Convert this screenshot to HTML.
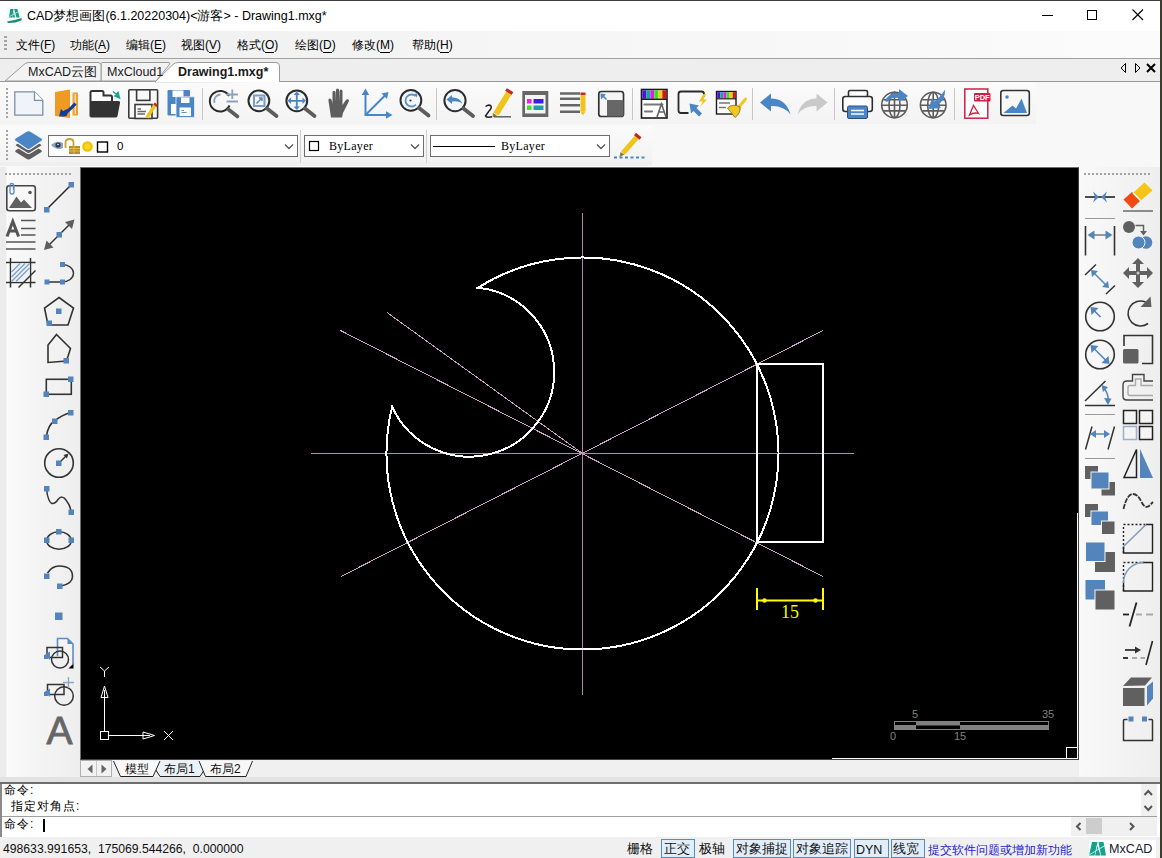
<!DOCTYPE html>
<html><head><meta charset="utf-8">
<style>
*{box-sizing:border-box}
html,body{margin:0;padding:0}
body{width:1162px;height:858px;overflow:hidden;position:relative;background:#f0f0f0;font-family:"Liberation Sans",sans-serif;color:#000}
.a{position:absolute}
.t{position:absolute;white-space:nowrap;line-height:1}
svg{position:absolute;overflow:visible}
u{text-decoration:none;border-bottom:1px solid #000}
</style></head><body>
<!-- title bar -->
<div class="a" style="left:0;top:0;width:1162px;height:31px;background:#fff;border-top:1px solid #3c3c3c"></div>
<!-- menu bar -->
<div class="a" style="left:0;top:31px;width:1160px;height:27px;background:linear-gradient(90deg,#eeeeee,#f5f5f5 40%,#f9f9f9 80%,#fbfbfb)"></div>
<div class="a" style="left:0;top:58px;width:1160px;height:1px;background:#a0a0a0"></div>
<!-- doc tabs strip -->
<div class="a" style="left:0;top:59px;width:1160px;height:22px;background:#eeeeee"></div>
<div class="a" style="left:0;top:81px;width:1160px;height:1px;background:#9a9a9a"></div>
<!-- toolbars -->
<div class="a" style="left:0;top:82px;width:1160px;height:85px;background:#f8f8f8"></div>
<div class="a" style="left:0;top:82px;width:1036px;height:42px;background:linear-gradient(#fbfbfb,#f3f3f3)"></div>
<div class="a" style="left:0;top:126px;width:652px;height:38px;background:linear-gradient(#fbfbfb,#f2f2f2)"></div>
<div class="a" style="left:0;top:162px;width:652px;height:4px;background:#efefef"></div>
<div class="a" style="left:80px;top:166px;width:999px;height:1px;background:#fff"></div>
<!-- left & right toolbars -->
<div class="a" style="left:0;top:167px;width:80px;height:610px;background:linear-gradient(90deg,#ececec 0,#ececec 6px,#fbfbfb 7px,#f5f5f5 40%,#eeeeee 100%)"></div>
<div class="a" style="left:1079px;top:167px;width:81px;height:610px;background:linear-gradient(90deg,#f9f9f9,#eeeeee)"></div>
<!-- canvas -->
<div class="a" style="left:80px;top:167px;width:999px;height:593px;background:#000;border-left:1px solid #6d6d6d;border-top:1px solid #6d6d6d;border-right:1px solid #404040;border-bottom:1px solid #404040"></div>
<div class="a" style="left:1077px;top:513px;width:1px;height:246px;background:#fff"></div>
<div class="a" style="left:832px;top:758px;width:246px;height:1px;background:#fff"></div>
<!-- layout tabs bg -->
<div class="a" style="left:80px;top:760px;width:999px;height:17px;background:#f0f0f0"></div>
<!-- splitter -->
<div class="a" style="left:0;top:777px;width:1160px;height:6px;background:#e3e3e3"></div>
<div class="a" style="left:0;top:782px;width:1160px;height:2px;background:#6e6e6e"></div>
<!-- command area -->
<div class="a" style="left:0;top:784px;width:1160px;height:53px;background:#fff;border-left:2px solid #8a8a8a"></div>
<div class="a" style="left:2px;top:816px;width:1155px;height:1px;background:#a0a0a0"></div>
<!-- status bar bg -->
<div class="a" style="left:0;top:837px;width:1160px;height:21px;background:#f0f0f0"></div>
<!-- right window border -->
<div class="a" style="left:1160px;top:0;width:2px;height:858px;background:#3b3d2e"></div>
<!-- title icon -->
<svg class="a" style="left:0;top:0" width="30" height="30" viewBox="0 0 30 30">
<rect x="6" y="7" width="16" height="16" fill="#f4fbfb"/>
<path d="M9 17.5 L10.3 9 H13.6 L12.3 17.5 Z M12.5 17.5 L13.8 12 L15 17.5 Z M14.2 9 H17.4 L19.6 17.5 H16.4 Z" fill="#1e9a82"/>
<path d="M9.5 16.5 L18.5 11.5" stroke="#b8f4ec" stroke-width="0.8"/>
<path d="M7 21.5 Q14 20.5 21.8 18 L21.3 20.5 Q15 23.2 8 23 Z" fill="#1e8a72"/>
</svg>
<div class="t" style="left:27px;top:10px;font-size:12.5px;color:#000">CAD梦想画图(6.1.20220304)&lt;游客&gt; - Drawing1.mxg*</div>
<!-- window controls -->
<div class="a" style="left:1042px;top:15px;width:11px;height:1px;background:#000"></div>
<div class="a" style="left:1087px;top:10px;width:10px;height:10px;border:1px solid #000"></div>
<svg class="a" style="left:1132px;top:9px" width="12" height="12" viewBox="0 0 12 12"><path d="M0.5 0.5 L11 11 M11 0.5 L0.5 11" stroke="#000" stroke-width="1.1"/></svg>
<!-- menu -->
<div class="a" style="left:4px;top:36px;width:3px;height:15px;background:repeating-linear-gradient(#a3a3a3 0 2px,transparent 2px 4px)"></div>
<div class="t" style="left:16px;top:39px;font-size:12px">文件(<u>F</u>)</div>
<div class="t" style="left:70px;top:39px;font-size:12px">功能(<u>A</u>)</div>
<div class="t" style="left:126px;top:39px;font-size:12px">编辑(<u>E</u>)</div>
<div class="t" style="left:181px;top:39px;font-size:12px">视图(<u>V</u>)</div>
<div class="t" style="left:237px;top:39px;font-size:12px">格式(<u>O</u>)</div>
<div class="t" style="left:295px;top:39px;font-size:12px">绘图(<u>D</u>)</div>
<div class="t" style="left:352px;top:39px;font-size:12px">修改(<u>M</u>)</div>
<div class="t" style="left:412px;top:39px;font-size:12px">帮助(<u>H</u>)</div>
<!-- doc tabs -->
<svg class="a" style="left:0;top:0" width="300" height="90" viewBox="0 0 300 90">
<path d="M101 81 L101 63.5 Q101 62.5 103 62.5 L168 62.5 Q171 62.5 169 65 L156 81 Z" fill="#f3f3f3" stroke="#9a9a9a" stroke-width="1"/>
<path d="M5 81 L24 64.5 Q26 62.5 29 62.5 L98 62.5 Q101 62.5 101 65 L101 81 Z" fill="#f3f3f3" stroke="#9a9a9a" stroke-width="1"/>
<path d="M155 82 L173 64.5 Q175 62.5 178 62.5 L276 62.5 Q279.5 62.5 279.5 66 L279.5 81.5 Z" fill="#fff" stroke="#9a9a9a" stroke-width="1"/>
<rect x="156" y="81" width="123" height="1.5" fill="#fff"/>
</svg>
<div class="t" style="left:28px;top:66px;font-size:12.5px;color:#1a1a1a">MxCAD云图</div>
<div class="t" style="left:107px;top:66px;font-size:12.5px;color:#1a1a1a">MxCloud1</div>
<div class="t" style="left:178px;top:66px;font-size:12.5px;font-weight:bold;color:#1a1a1a">Drawing1.mxg*</div>
<svg class="a" style="left:1115px;top:60px" width="45" height="20" viewBox="0 0 45 20">
<path d="M10.5 3.5 L6 8 L10.5 12.5 Z" fill="none" stroke="#000" stroke-width="1"/>
<path d="M20.5 3.5 L25 8 L20.5 12.5 Z" fill="none" stroke="#000" stroke-width="1"/>
<path d="M32 4 L40 12 M40 4 L32 12" stroke="#000" stroke-width="2"/>
</svg>
<!-- toolbar1 icons -->
<svg class="a" style="left:0;top:0" width="1162" height="170" viewBox="0 0 1162 170">
<!-- gripper -->
<path d="M7 88 V118" stroke="#a3a3a3" stroke-width="2" stroke-dasharray="2 2"/>
<!-- new -->
<path d="M14.8 91.8 H34.5 L42.8 100.3 V115.2 H14.8 Z" fill="#f0f3f7" stroke="#7b90a8" stroke-width="1.3"/>
<path d="M34.5 91.8 V100.3 H42.8" fill="#fff" stroke="#7b90a8" stroke-width="1.3"/>
<!-- import -->
<path d="M55 92 L70 89.5 V118 L55 116 Z" fill="#ef9a22"/>
<rect x="72.5" y="92.5" width="5.5" height="23" fill="#f0a030"/>
<rect x="74.5" y="94" width="1.5" height="20" fill="#fde0b0"/>
<path d="M76 104 L65 112 L66.5 109 L59.5 114 L63 115.5 L60 117 L66.5 116 L67.5 113.5 Z" fill="#0b3f9a"/>
<path d="M75.5 103.5 Q70 110 64 113" stroke="#0b3f9a" stroke-width="3" fill="none"/>
<path d="M59 116.5 L61 109 L67 114.5 Z" fill="#0b3f9a"/>
<!-- open -->
<path d="M90.5 116.5 V92.5 Q90.5 91 92 91 H102 Q103.5 91 103.5 92.5 V95.5 H110.5 Q112 95.5 112 97 V102" fill="#fff" stroke="#333" stroke-width="2"/>
<path d="M90 103 Q90 101 92 101 H118.5 Q120.5 101 120 103 L117.5 116 Q117.2 117.5 115.5 117.5 H91.5 Q90 117.5 90 116 Z" fill="#333"/>
<path d="M113 91.5 L116.5 94.5 L115 96 L119.5 98 L118 92.5 L116.5 94" fill="#1fa58a" stroke="#1fa58a" stroke-width="1.5"/>
<!-- save -->
<rect x="128.8" y="89.8" width="28.8" height="28.5" rx="1" fill="#f8f8f8" stroke="#3a3a3a" stroke-width="1.6"/>
<rect x="136.6" y="89.8" width="13.3" height="10.6" fill="#f8f8f8" stroke="#3a3a3a" stroke-width="1.6"/>
<rect x="135" y="104.5" width="17" height="14" fill="#fff" stroke="#3a3a3a" stroke-width="1.6"/>
<path d="M137.5 109 H141 M137.5 111.5 H146 M137.5 114 H145" stroke="#666" stroke-width="1.3"/>
<path d="M155.5 104.5 L147 117.5" stroke="#f2c31a" stroke-width="3.5"/>
<path d="M154 103.5 L157.5 106" stroke="#b3302a" stroke-width="2.5"/>
<!-- save as -->
<rect x="167.5" y="90" width="22.5" height="25.5" rx="1" fill="#4a86c5"/>
<rect x="172.5" y="90.5" width="11" height="6.5" fill="#fff"/>
<rect x="171" y="104" width="5" height="10" fill="#fff"/>
<rect x="176" y="96.8" width="18.5" height="20.6" rx="1" fill="#4a86c5" stroke="#f0f4fa" stroke-width="0.8"/>
<rect x="181" y="97.5" width="8.5" height="5.5" fill="#fff"/>
<rect x="179.5" y="107.5" width="11.5" height="8.5" fill="#fff"/>
<path d="M181.5 110.5 H184 M181.5 112.5 H186.5" stroke="#4a86c5" stroke-width="0.9"/>
<!-- separators -->
<g stroke="#c7c7c7" stroke-width="1">
<line x1="202.5" y1="88" x2="202.5" y2="120"/>
<line x1="436.5" y1="88" x2="436.5" y2="120"/>
<line x1="632.5" y1="88" x2="632.5" y2="120"/>
<line x1="752.5" y1="88" x2="752.5" y2="120"/>
<line x1="834.5" y1="88" x2="834.5" y2="120"/>
<line x1="954.5" y1="88" x2="954.5" y2="120"/>
</g>
<!-- zoom realtime -->
<path d="M229 96 A10.3 10.3 0 1 0 229.5 105.5" fill="none" stroke="#2b2b2b" stroke-width="2"/>
<path d="M228.5 109.5 L237.5 116.5" stroke="#5c5c5c" stroke-width="3.6" stroke-linecap="round"/>
<path d="M214.5 103 A6.5 6.5 0 0 1 220.5 94.5" fill="none" stroke="#8da3bb" stroke-width="1.8"/>
<path d="M226.5 94.5 H238 M232.3 89.5 V99 M226.5 101.5 H238" stroke="#8da3bb" stroke-width="1.8"/>
<!-- zoom window -->
<circle cx="258.9" cy="100.8" r="10.4" fill="#f2f7fc" stroke="#2b2b2b" stroke-width="2"/>
<path d="M267 108.5 L276.5 116" stroke="#5c5c5c" stroke-width="3.8" stroke-linecap="round"/>
<rect x="254" y="95.5" width="10.5" height="10.5" fill="none" stroke="#7c9ec2" stroke-width="2"/>
<path d="M256.5 103.5 L262 98 M259 98 H262 V101" stroke="#5f84ad" stroke-width="1.4" fill="none"/>
<!-- zoom extents -->
<circle cx="296.8" cy="100.8" r="10.4" fill="#f2f7fc" stroke="#2b2b2b" stroke-width="2"/>
<path d="M305 108.5 L314.5 116" stroke="#5c5c5c" stroke-width="3.8" stroke-linecap="round"/>
<path d="M289.5 100.8 H304 M296.8 93.5 V108" stroke="#4a86c5" stroke-width="1.8"/>
<path d="M296.8 91.5 L293.5 95 H300 Z M296.8 110 L293.5 106.5 H300 Z M287.5 100.8 L291 97.5 V104 Z M306 100.8 L302.5 97.5 V104 Z" fill="#4a86c5"/>
<!-- hand -->
<path d="M331 117.5 L328.5 101 Q328 98.5 330 98.5 Q331.5 98.5 332 101 L332.5 104 L332.5 92.5 Q332.5 90.8 334 90.8 Q335.5 90.8 335.5 92.5 V102 L336 90 Q336 88.5 337.5 88.5 Q339 88.5 339 90 V102 L339.5 91 Q339.5 89.5 341 89.5 Q342.5 89.5 342.5 91 V105 L345.5 100.5 Q347 98.5 348.5 99.5 Q349.5 100.5 348.5 102 L343 113 L342 117.5 Z" fill="#5e5e5e"/>
<!-- axes -->
<path d="M365.5 92 V115 H389" stroke="#4a86c5" stroke-width="2" fill="none"/>
<path d="M365.5 88.5 L361.8 95 H369.2 Z M392.5 115 L386 111.3 V118.7 Z" fill="#4a86c5"/>
<path d="M366.5 114 L385 95.5" stroke="#4a86c5" stroke-width="2"/>
<path d="M388.5 92 L381.5 93.5 L387 99 Z" fill="#4a86c5"/>
<!-- zoom previous -->
<circle cx="410.9" cy="100.3" r="10.4" fill="#f2f7fc" stroke="#2b2b2b" stroke-width="2"/>
<path d="M419 108 L428.5 115.5" stroke="#5c5c5c" stroke-width="3.8" stroke-linecap="round"/>
<path d="M415.5 96 A6 6 0 1 0 416 104.5" fill="none" stroke="#5f8fc4" stroke-width="1.8"/>
<path d="M413.5 94 L417.5 93.5 L417 97.5 Z" fill="#5f8fc4"/>
<circle cx="410.5" cy="100.5" r="1.1" fill="#333"/>
<!-- zoom back -->
<circle cx="455" cy="100.6" r="10.6" fill="#f2f7fc" stroke="#2b2b2b" stroke-width="2"/>
<path d="M463.5 108.5 L473 116" stroke="#5c5c5c" stroke-width="3.8" stroke-linecap="round"/>
<path d="M446.5 99.5 L452 95 V97.5 Q460 97 462.5 104 Q459 100.5 452 101.5 V104 Z" fill="#4a86c5"/>
<!-- pencil sketch -->
<path d="M509.5 92 L496 114" stroke="#f2c31a" stroke-width="6.2"/>
<path d="M506 89.5 L512.5 93.5" stroke="#c0282d" stroke-width="3.2"/>
<path d="M492.8 113 L492.5 117.5 L497 115.5 Z" fill="#8a7a40"/>
<path d="M494 116.8 H511" stroke="#555" stroke-width="1.4"/>
<path d="M485.5 106.5 Q489 104 491 106 Q492 108 489 111 L485.5 116 Q487 118 492 116.8" stroke="#222" stroke-width="1.5" fill="none"/>
<!-- layer table -->
<rect x="522.3" y="91" width="26" height="26" fill="#666"/>
<rect x="525" y="95" width="20.5" height="18.5" fill="#f4f4f4"/>
<rect x="527" y="99" width="4.5" height="4.5" fill="#e81ee8"/>
<rect x="533.5" y="99" width="10" height="4.5" fill="#3a1ee8"/>
<rect x="527" y="105.5" width="4.5" height="4.5" fill="#3ee02a"/>
<rect x="533.5" y="105.5" width="10" height="4.5" fill="#1aa0a8"/>
<!-- lines + pencil -->
<path d="M560 93.5 H580 M560 98.8 H580 M560 105.3 H580 M560 111.8 H580" stroke="#666" stroke-width="2.6"/>
<rect x="580.5" y="94.5" width="5" height="17" fill="#f2c31a"/>
<path d="M580.5 111.5 L583 115.5 L585.5 111.5 Z" fill="#f2c31a"/>
<rect x="580.5" y="92.5" width="5" height="2.5" fill="#c0282d"/>
<!-- box arrow -->
<rect x="598.8" y="91.5" width="24.7" height="25" rx="2.5" fill="#f6f6f6" stroke="#333" stroke-width="1.7"/>
<path d="M607 100 H621.5 Q623.5 100 623.5 102 V114.5 Q623.5 116.5 621.5 116.5 H607 Z" fill="#676767"/>
<path d="M606.5 99.5 L601.5 94.5" stroke="#4a86c5" stroke-width="1.6"/>
<path d="M600.5 93.5 L601 99.5 L606 94.2 Z" fill="#4a86c5"/>
<!-- text style colorful -->
<rect x="641.5" y="89.5" width="25.5" height="28.5" fill="#fff" stroke="#1a1a1a" stroke-width="1.6"/>
<rect x="642.3" y="90.3" width="4" height="8.5" fill="#4d14d8"/>
<rect x="646.3" y="90.3" width="4" height="8.5" fill="#10a8a0"/>
<rect x="650.3" y="90.3" width="4" height="8.5" fill="#e020e0"/>
<rect x="654.3" y="90.3" width="4" height="8.5" fill="#38e028"/>
<rect x="658.3" y="90.3" width="4" height="8.5" fill="#f0d010"/>
<rect x="662.3" y="90.3" width="4" height="8.5" fill="#d01818"/>
<path d="M641.5 99.3 H667" stroke="#1a1a1a" stroke-width="1.4"/>
<path d="M644.5 104.5 H662.5 M645 111.5 H652" stroke="#777" stroke-width="2.2" stroke-linecap="round"/>
<path d="M657 117 L661.5 104 L666 117 M659 112 H664" stroke="#666" stroke-width="1.6" fill="none"/>
<!-- select -->
<path d="M688.5 113 H681 Q678.5 113 678.5 110.5 V94 Q678.5 91.5 681 91.5 H701.5 Q704 91.5 704 94 V97" fill="none" stroke="#2a2a2a" stroke-width="1.8"/>
<path d="M703.5 94 L699 101.5 H703 L700 107 L707 99.5 H703.5 L706 94 Z" fill="#f2c31a"/>
<path d="M689.5 103.5 L691 113.5 L693.5 111 L699 116.5 L702 113.5 L696.5 108 L699 105.5 Z" fill="#4a86c5"/>
<!-- colorful + brush -->
<rect x="716.5" y="91.5" width="19.5" height="22.5" fill="#fff" stroke="#1a1a1a" stroke-width="1.4"/>
<rect x="717.2" y="92.2" width="3.1" height="6" fill="#4d14d8"/><rect x="720.3" y="92.2" width="3.1" height="6" fill="#10a8a0"/><rect x="723.4" y="92.2" width="3.1" height="6" fill="#e020e0"/><rect x="726.5" y="92.2" width="3.1" height="6" fill="#38e028"/><rect x="729.6" y="92.2" width="3.1" height="6" fill="#f0d010"/><rect x="732.7" y="92.2" width="3.1" height="6" fill="#d01818"/>
<path d="M716.5 98.8 H736" stroke="#1a1a1a" stroke-width="1.2"/>
<path d="M719 103 H730 M719 107.5 H726" stroke="#777" stroke-width="1.5"/>
<path d="M745.5 99 L739 107" stroke="#f0c820" stroke-width="3" stroke-linecap="round"/>
<path d="M727.5 108 Q733 103 740 107 Q741 113 735 117.5 Z" fill="#f0c820" stroke="#7a6a10" stroke-width="0.8"/>
<!-- undo -->
<path d="M760 102.5 L771 93.5 V98.5 Q786 98.5 790.5 114.5 Q784 105.5 771 106 V111.5 Z" fill="#4a86c5"/>
<!-- redo -->
<path d="M827.5 102.5 L816.5 93.5 V98.5 Q802 98.5 797.5 114.5 Q804 105.5 816.5 106 V111.5 Z" fill="#c9c9c9"/>
<!-- printer -->
<rect x="848.5" y="90.5" width="19" height="6.5" rx="1.5" fill="#fff" stroke="#2e2e2e" stroke-width="1.6"/>
<rect x="842.8" y="96.5" width="29.5" height="15" rx="2.5" fill="#fff" stroke="#2e2e2e" stroke-width="1.6"/>
<rect x="847.5" y="106" width="20" height="12.5" rx="1.5" fill="#4a86c5" stroke="#2e4e7e" stroke-width="1"/>
<path d="M851 110.5 H864 M851 114 H864" stroke="#fff" stroke-width="1.5"/>
<!-- globe 1 -->
<g fill="none" stroke="#5c5c5c" stroke-width="1.6">
<circle cx="894.5" cy="105" r="12.8"/>
<ellipse cx="894.5" cy="105" rx="5.5" ry="12.8"/>
<path d="M894.5 92.2 V117.8 M881.7 105.3 H907.3 M883.5 99.8 H905.5 M883.5 110.9 H905.5"/>
<circle cx="933.2" cy="105" r="12.8"/>
<ellipse cx="933.2" cy="105" rx="5.5" ry="12.8"/>
<path d="M933.2 92.2 V117.8 M920.4 105.3 H946 M922.2 99.8 H944.2 M922.2 110.9 H944.2"/>
</g>
<path d="M885 101 Q889 92 899 93.5 V89 L908 96 L899 102 V98 Q891 97 887 102 Z" fill="#4a86c5"/>
<path d="M945 89.5 Q945.5 100 938 104.5 L941 108 L928.5 109 L932 98 L934.5 101.5 Q940 97.5 945 89.5 Z" fill="#4a86c5"/>
<!-- pdf -->
<rect x="964.8" y="89" width="23" height="29.2" fill="#fff" stroke="#cf1f45" stroke-width="1.5"/>
<rect x="974" y="93" width="16.5" height="8.5" rx="1" fill="#cf1f45"/>
<text x="982.2" y="100.3" font-family="Liberation Sans" font-weight="bold" font-size="7.5" fill="#fff" text-anchor="middle">PDF</text>
<path d="M969.5 115 L973.5 105.5 L978.5 113.5 Q974 112 969.5 115 Z" fill="none" stroke="#cf1f45" stroke-width="1.3"/>
<!-- image -->
<rect x="1000.8" y="90.5" width="28.5" height="25" rx="2.5" fill="#f8f8f8" stroke="#333" stroke-width="1.6"/>
<circle cx="1007" cy="97" r="1.8" fill="#4a86c5"/>
<path d="M1003.5 113 L1012.5 105.5 L1016 108.5 L1021.5 98.5 L1027 113 Z" fill="#4a86c5"/>
</svg>
<!-- toolbar2 -->
<svg class="a" style="left:0;top:0" width="1162" height="170" viewBox="0 0 1162 170">
<path d="M7 130 V160" stroke="#a3a3a3" stroke-width="2" stroke-dasharray="2 2"/>
<!-- layers icon -->
<path d="M15.5 152 Q14.5 151 16 150 L26 144.5 Q28.5 143 31 144.5 L41 150 Q42.5 151 41.5 152 L31 158.5 Q28.5 160.5 26 158.5 Z" fill="#5e5e5e"/>
<path d="M15.5 146 Q14.5 145 16 144 L26 138.5 Q28.5 137 31 138.5 L41 144 Q42.5 145 41.5 146 L31 152.5 Q28.5 154.5 26 152.5 Z" fill="#5e5e5e" stroke="#f4f4f4" stroke-width="1.2"/>
<path d="M15 141 Q13.5 139.5 15.5 138 L26 131.5 Q28.5 130 31 131.5 L41.5 138 Q43.5 139.5 42 141 L31 148.5 Q28.5 150.5 26 148.5 Z" fill="#4a86c5" stroke="#eef6fc" stroke-width="1.2"/>
<g fill="#fff" stroke="#6e6e6e" stroke-width="1">
<rect x="48.5" y="135.5" width="249" height="21"/>
<rect x="304.5" y="135.5" width="119" height="21"/>
<rect x="430.5" y="135.5" width="179" height="21"/>
</g>
<g stroke="#cfcfcf" stroke-width="1"><line x1="300.5" y1="130" x2="300.5" y2="163"/><line x1="426.5" y1="130" x2="426.5" y2="163"/></g>
<g fill="none" stroke="#555" stroke-width="1.3">
<path d="M285 144.5 L289 148.5 L293 144.5"/>
<path d="M411 144.5 L415 148.5 L419 144.5"/>
<path d="M597 144.5 L601 148.5 L605 144.5"/>
</g>
<!-- eye -->
<path d="M51 145 Q57 139.5 63 143 L63 148 Q57 151 51 145 Z" fill="#8fa3b8"/>
<circle cx="58" cy="145" r="2.6" fill="#213b5c"/>
<circle cx="58" cy="144.5" r="0.8" fill="#fff"/>
<!-- lock -->
<path d="M65.5 148 V142.5 Q65.5 139 69.5 139 Q73.5 139 73.5 142.5 V146" fill="none" stroke="#c9a238" stroke-width="1.8"/>
<rect x="69" y="146" width="11" height="8" fill="#b89020"/>
<path d="M69 148.5 H80 M69 151 H80 M74 146 V154" stroke="#e8c860" stroke-width="0.8"/>
<!-- sun -->
<circle cx="87.5" cy="146.5" r="5.3" fill="#f5c000"/>
<circle cx="87.5" cy="146.5" r="3" fill="#ffd820"/>
<rect x="97.5" y="142" width="10" height="10" fill="none" stroke="#000" stroke-width="1.4"/>
<rect x="309.5" y="141.5" width="9" height="9" fill="none" stroke="#000" stroke-width="1.2"/>
<path d="M433 146.5 H495" stroke="#000" stroke-width="1.2"/>
<!-- pencil -->
<path d="M638 136 L623 153" stroke="#f2c31a" stroke-width="5"/>
<path d="M635 134 L640.5 138.5" stroke="#c0282d" stroke-width="3"/>
<path d="M620.5 152 L619.5 157 L624.5 154.5 Z" fill="#8a7a40"/>
<path d="M614 157.5 H645" stroke="#4a86c5" stroke-width="2.2" stroke-dasharray="3 2.5"/>
</svg>
<div class="t" style="left:117px;top:141px;font-size:11.5px">0</div>
<div class="t" style="left:329px;top:140px;font-size:12px;font-family:'Liberation Serif',serif;letter-spacing:0.3px">ByLayer</div>
<div class="t" style="left:501px;top:140px;font-size:12px;font-family:'Liberation Serif',serif;letter-spacing:0.3px">ByLayer</div>
<!-- left toolbar -->
<svg class="a" style="left:0;top:0" width="1162" height="858" viewBox="0 0 1162 858">
<path d="M5 174 H72" stroke="#a3a3a3" stroke-width="2" stroke-dasharray="2 2"/>
<path d="M1084 174 H1152" stroke="#a3a3a3" stroke-width="2" stroke-dasharray="2 2"/>
<!-- image attach -->
<rect x="6.8" y="185.8" width="28.5" height="25" rx="2.5" fill="#f8f8f8" stroke="#444" stroke-width="1.6"/>
<path d="M9 208 L16.5 196.5 L21 202.5 L24 199.5 L32 208 Z" fill="#606060"/>
<circle cx="30" cy="192.5" r="1.8" fill="#555"/>
<path d="M14 184.5 V192 Q14 194 12 194 Q10 194 10 192 V185 Q10 183.5 12 183.5 Q13.5 183.5 13.5 185 V190" fill="none" stroke="#5a8cc8" stroke-width="1.3"/>
<!-- line -->
<path d="M47.5 208.5 L71.5 184.5" stroke="#222" stroke-width="1.5"/>
<rect x="44" y="207" width="5.5" height="5.5" fill="#5384bc"/>
<rect x="68.5" y="182" width="5.5" height="5.5" fill="#5384bc"/>
<!-- text -->
<path d="M7 236.5 L12.8 221.5 L18.6 236.5 M9.5 231 H16" stroke="#555" stroke-width="3" fill="none"/>
<path d="M21 220.5 H35.5 M21 228.5 H35.5 M21 235 H35.5 M6 242 H35.5 M6 249 H35.5" stroke="#555" stroke-width="1.3"/>
<!-- dim aligned arrows -->
<path d="M49 245 L69 225" stroke="#333" stroke-width="1.4"/>
<path d="M74.5 219.5 L65 222 L72 229 Z M44 250 L53.5 247.5 L46.5 240.5 Z" fill="#5e5e5e"/>
<rect x="56.5" y="232" width="5.5" height="5.5" fill="#5384bc"/>
<!-- hatch -->
<path d="M6 262.5 H35.5 M6 282.5 H35.5 M10.5 258 V287.5 M30.5 258 V287.5" stroke="#333" stroke-width="1.5"/>
<rect x="11.3" y="263.3" width="18.4" height="18.4" fill="#eef2f7"/>
<path d="M11.5 272 L20 263.5 M11.5 277 L25 263.5 M11.5 281.5 L29.5 263.5 M16 281.5 L29.5 268" stroke="#7fa2c8" stroke-width="1.4"/>
<path d="M18.5 287.5 L35.5 270.5" stroke="#333" stroke-width="1.5"/>
<!-- line + arc -->
<path d="M47 282 H62 A11.5 8.75 0 0 0 62 264.5" fill="none" stroke="#333" stroke-width="1.4"/>
<rect x="44.5" y="279.5" width="5" height="5" fill="#5384bc"/>
<rect x="60" y="279.5" width="5" height="5" fill="#5384bc"/>
<rect x="60" y="262" width="5" height="5" fill="#5384bc"/>
<!-- pentagon -->
<path d="M59 297.5 L73.5 308 L68 325 H48 L44.5 308 Z" fill="none" stroke="#333" stroke-width="1.6"/>
<rect x="56" y="308.5" width="5.5" height="5.5" fill="#5384bc"/>
<rect x="46.5" y="320.5" width="5.5" height="5.5" fill="#5384bc"/>
<!-- polygon -->
<path d="M56.5 334.5 L70.5 348.5 L66.5 361 L48 362.5 V345 Z" fill="none" stroke="#333" stroke-width="1.6"/>
<rect x="63.5" y="358" width="5.5" height="5.5" fill="#5384bc"/>
<!-- rect -->
<rect x="46.3" y="379.3" width="25" height="15" fill="none" stroke="#333" stroke-width="1.6"/>
<rect x="68" y="376.5" width="5.5" height="5.5" fill="#5384bc"/>
<rect x="43.5" y="391.5" width="5.5" height="5.5" fill="#5384bc"/>
<!-- arc 3p -->
<path d="M46.5 436 Q48 425 54.5 421 Q62 415 70.5 412.5" fill="none" stroke="#333" stroke-width="1.6"/>
<rect x="68" y="410" width="5.5" height="5.5" fill="#5384bc"/>
<rect x="52" y="418.5" width="5.5" height="5.5" fill="#5384bc"/>
<rect x="43.5" y="434.5" width="5.5" height="5.5" fill="#5384bc"/>
<!-- circle -->
<circle cx="59" cy="463" r="14.3" fill="none" stroke="#333" stroke-width="1.6"/>
<path d="M59 463 L66.5 455.5" stroke="#333" stroke-width="1.5"/>
<path d="M68.5 453.5 L63.5 455 L67 458.5 Z" fill="#333"/>
<rect x="56" y="460.5" width="5.5" height="5.5" fill="#5384bc"/>
<!-- spline -->
<path d="M46.5 489 Q48 502 52 503.5 Q55 504 58 499.5 Q62 494.5 66 500 Q70 505 71 511" fill="none" stroke="#333" stroke-width="1.5"/>
<rect x="44" y="486" width="5.5" height="5.5" fill="#5384bc"/>
<rect x="68.5" y="509.5" width="5.5" height="5.5" fill="#5384bc"/>
<!-- ellipse -->
<ellipse cx="59" cy="540.5" rx="12.3" ry="8.8" fill="none" stroke="#333" stroke-width="1.6"/>
<rect x="56" y="529" width="5.5" height="5.5" fill="#5384bc"/>
<rect x="44" y="537.5" width="5.5" height="5.5" fill="#5384bc"/>
<rect x="68.5" y="537.5" width="5.5" height="5.5" fill="#5384bc"/>
<!-- ellipse arc -->
<path d="M47.5 573 Q52 566 59 566 Q73 566 72.5 577 Q72 584 61 586" fill="none" stroke="#333" stroke-width="1.6"/>
<rect x="44" y="573.5" width="5.5" height="5.5" fill="#5384bc"/>
<rect x="57" y="583.5" width="5.5" height="5.5" fill="#5384bc"/>
<!-- point -->
<rect x="55" y="612.5" width="7.5" height="7.5" fill="#5384bc"/>
<!-- block 1 -->
<path d="M57.5 656 V638.5 H67.5 L73 644 V664" fill="#f4f4f4" stroke="#5a8cc8" stroke-width="1.6"/>
<path d="M67.5 638.5 V644 H73 Z" fill="#5a8cc8"/>
<path d="M47 656 V647.5 H62.5 V657.5 H49" fill="none" stroke="#333" stroke-width="1.5"/>
<circle cx="60" cy="659.5" r="8.5" fill="none" stroke="#333" stroke-width="1.5"/>
<path d="M73.5 663.5 V668.5 H68.5 Z" fill="#000"/>
<path d="M44.5 655 L50 651.5 V660 Z" fill="#5384bc"/><rect x="44" y="655" width="4" height="4" fill="#5384bc"/>
<!-- block 2 -->
<path d="M47.5 693 V684.5 H64 V694.5 H49" fill="none" stroke="#333" stroke-width="1.5"/>
<circle cx="64" cy="696" r="9.3" fill="none" stroke="#333" stroke-width="1.5"/>
<path d="M68.5 677 V688 M63 682.5 H74" stroke="#8aa8c8" stroke-width="1.4"/>
<path d="M44.5 692 L50 688.5 V697 Z" fill="#5384bc"/><rect x="44" y="692" width="4" height="4" fill="#5384bc"/>
<!-- A -->
<text x="59.5" y="744" font-family="Liberation Sans" font-size="39" fill="#666" stroke="#666" stroke-width="0.9" text-anchor="middle">A</text>
</svg>
<!-- right toolbar -->
<svg class="a" style="left:0;top:0" width="1162" height="858" viewBox="0 0 1162 858">
<g stroke="#9a9a9a" stroke-width="1"><path d="M1085 218.5 H1115 M1085 414.5 H1115 M1085 458.5 H1115"/></g>
<!-- break/join -->
<path d="M1085 197 H1115" stroke="#222" stroke-width="1.6"/>
<path d="M1099 197 L1093 191.5 L1095 197 L1093 202.5 Z M1101 197 L1107 191.5 L1105 197 L1107 202.5 Z" fill="#5384bc"/>
<!-- eraser -->
<path d="M1133.5 192.5 L1144.5 182.5 L1152.5 190.5 L1141 200.5 Z" fill="#f5c518"/>
<path d="M1123.5 199.5 L1132 192 L1140.5 200.5 L1132 208.5 Z" fill="#f04a10"/>
<path d="M1133 193 L1141 201" stroke="#fff" stroke-width="1.5"/>
<path d="M1123 211 H1153" stroke="#555" stroke-width="1.3"/>
<!-- dim linear -->
<path d="M1085.5 226 V255.5 M1114.5 226 V255.5" stroke="#333" stroke-width="1.6"/>
<path d="M1092 235 H1108" stroke="#777" stroke-width="1.5"/>
<path d="M1087.5 235 L1094.5 230.5 V239.5 Z M1112.5 235 L1105.5 230.5 V239.5 Z" fill="#5384bc"/>
<!-- copy -->
<circle cx="1129" cy="227" r="6" fill="#606060"/>
<path d="M1135.5 225.5 H1143.5 V232" fill="none" stroke="#606060" stroke-width="1.5"/>
<path d="M1140 231 H1147 L1143.5 235.5 Z" fill="#606060"/>
<circle cx="1146" cy="242.5" r="6.3" fill="#5384bc"/>
<circle cx="1138.5" cy="242.5" r="6.5" fill="#5384bc" stroke="#f4f4f4" stroke-width="1"/>
<!-- move -->
<path d="M1138 258 L1144 264 H1140 V271 H1147 V267 L1153 273 L1147 279 V275 H1140 V282 H1144 L1138 288 L1132 282 H1136 V275 H1129 V279 L1123 273 L1129 267 V271 H1136 V264 H1132 Z" fill="#606060"/>
<circle cx="1138" cy="273" r="1.5" fill="#ccc"/>
<!-- dim aligned -->
<path d="M1085 275 L1096 264.5 M1106 294 L1115 285.5" stroke="#333" stroke-width="1.5"/>
<path d="M1093 272 L1107 286" stroke="#5384bc" stroke-width="1.5"/>
<path d="M1091 270 L1092 277 L1098 271 Z M1109 288 L1102 287 L1108 281 Z" fill="#5384bc"/>
<!-- dim radius -->
<circle cx="1100" cy="316.5" r="14.3" fill="none" stroke="#333" stroke-width="1.6"/>
<path d="M1100.5 317 L1093 309.5" stroke="#5384bc" stroke-width="1.6"/>
<path d="M1090.5 307 L1091.5 315 L1098.5 308 Z" fill="#5384bc"/>
<!-- rotate -->
<path d="M1145.5 302 A12.5 12.5 0 1 0 1148 323.5" fill="none" stroke="#333" stroke-width="1.6"/>
<path d="M1150.5 296.5 L1140.5 307 H1151.5 Z" fill="#606060"/>
<!-- dim diameter -->
<circle cx="1100" cy="354.5" r="14.3" fill="none" stroke="#333" stroke-width="1.6"/>
<path d="M1093 347.5 L1107 361.5" stroke="#5384bc" stroke-width="1.6"/>
<path d="M1090.5 345 L1091.5 353 L1098.5 346 Z M1109.5 364 L1108.5 356 L1101.5 363 Z" fill="#5384bc"/>
<!-- scale -->
<path d="M1124 346 V335.5 H1152.5 V363.5 H1142" fill="none" stroke="#333" stroke-width="1.6"/>
<rect x="1123" y="349" width="15.5" height="14.5" rx="1.5" fill="#606060"/>
<!-- dim angular -->
<path d="M1085 401 L1105.5 381 M1085 405.5 H1115" stroke="#333" stroke-width="1.5"/>
<path d="M1104 388 Q1109 395 1108 401" fill="none" stroke="#5384bc" stroke-width="1.5"/>
<path d="M1101.5 385 L1103 392 L1108 387 Z M1108 405 L1104 398 L1111.5 398.5 Z" fill="#5384bc"/>
<!-- offset -->
<path d="M1153 381 H1144 V374.5 H1132.5 V381 H1127 Q1123 381 1123 385 V396.5 Q1123 400 1127 400 H1153" fill="none" stroke="#444" stroke-width="1.4"/>
<path d="M1153 385.5 H1141 V379 H1135.5 V385.5 H1130 Q1128 385.5 1128 387.5 V393.5 Q1128 395.5 1130 395.5 H1153" fill="none" stroke="#a9a9a9" stroke-width="1.4"/>
<!-- dim oblique -->
<path d="M1085.5 449.5 L1092 426.5 M1108 449.5 L1114.5 426.5" stroke="#333" stroke-width="1.5"/>
<path d="M1092 434 H1108" stroke="#5384bc" stroke-width="1.5"/>
<path d="M1090 434 L1096 430 V438 Z M1110 434 L1104 430 V438 Z" fill="#5384bc"/>
<!-- array -->
<g fill="#f4f4f4" stroke="#222" stroke-width="1.5">
<rect x="1123.5" y="410.5" width="13" height="13"/><rect x="1139.5" y="410.5" width="13" height="13"/><rect x="1139.5" y="426.5" width="13" height="13"/>
</g>
<rect x="1123.5" y="426.5" width="13" height="13" fill="#f4f4f4" stroke="#9ab0c8" stroke-width="1.5"/>
<!-- mirror -->
<path d="M1136.5 449.5 V477.5 H1124 Z" fill="none" stroke="#222" stroke-width="1.5"/>
<path d="M1140 449 L1153 478 H1140 Z" fill="#5384bc"/>
<!-- draw order 1 -->
<rect x="1085" y="466" width="13" height="13" fill="#606060"/>
<rect x="1101.5" y="482" width="13.5" height="13.5" fill="#606060"/>
<rect x="1091" y="472" width="18" height="17" fill="#5384bc" stroke="#f4f4f4" stroke-width="1"/>
<!-- spline dashed -->
<path d="M1123.5 509 Q1127 494 1133 494 Q1138 494 1141.5 502 Q1145 509 1149 506 L1153 502" fill="none" stroke="#333" stroke-width="1.8" stroke-dasharray="5 1.2"/>
<!-- draw order 2 -->
<rect x="1085" y="504" width="13" height="13" fill="#606060"/>
<rect x="1091" y="511" width="17.5" height="14.5" fill="#5384bc" stroke="#f4f4f4" stroke-width="1"/>
<rect x="1101.5" y="521" width="13.5" height="13.5" fill="#606060" stroke="#f4f4f4" stroke-width="1"/>
<!-- chamfer -->
<path d="M1123.5 553 V527 M1123.5 524.5 H1146" stroke="#222" stroke-width="1.4" stroke-dasharray="2 2"/>
<path d="M1146 524.5 H1152.5 V553 H1123.5 V546.5" fill="none" stroke="#222" stroke-width="1.4"/>
<path d="M1123.5 546.5 L1146 524.5" stroke="#7f9bb8" stroke-width="1.5"/>
<!-- draw order 3 -->
<rect x="1095" y="552" width="20" height="20" fill="#606060"/>
<rect x="1085.5" y="542" width="19.5" height="19.5" fill="#5384bc" stroke="#f4f4f4" stroke-width="1"/>
<!-- fillet -->
<path d="M1123.5 591 V565 M1123.5 562.5 H1144" stroke="#222" stroke-width="1.4" stroke-dasharray="2 2"/>
<path d="M1142 562.5 H1152.5 V591 H1123.5 V583" fill="none" stroke="#222" stroke-width="1.4"/>
<path d="M1123.5 583 A20 20 0 0 1 1143.5 562.5" fill="none" stroke="#7f9bb8" stroke-width="1.5"/>
<!-- draw order 4 -->
<rect x="1085.5" y="580" width="19.5" height="19.5" fill="#5384bc"/>
<rect x="1095" y="590" width="20" height="20" fill="#606060" stroke="#f4f4f4" stroke-width="1"/>
<!-- break -->
<path d="M1123 614.5 H1129" stroke="#222" stroke-width="1.8"/>
<path d="M1136.5 602.5 L1129.5 626.5" stroke="#222" stroke-width="1.8"/>
<path d="M1136 614.5 H1142 M1146 614.5 H1153" stroke="#a9a9a9" stroke-width="1.8"/>
<!-- extend -->
<path d="M1125 650 H1138" stroke="#333" stroke-width="1.8"/>
<path d="M1141 650 L1135 646.5 V653.5 Z" fill="#333"/>
<path d="M1123 658 H1128" stroke="#222" stroke-width="1.8"/>
<path d="M1132 658 H1137 M1140.5 658 H1145" stroke="#a9a9a9" stroke-width="1.8"/>
<path d="M1152.5 641 L1146 665" stroke="#222" stroke-width="1.6"/>
<!-- 3d box -->
<path d="M1123 686 L1131 677.5 H1152 L1145 685.5 Z" fill="#606060"/>
<path d="M1147 686.5 L1153 681.5 V698.5 L1147 705.5 Z" fill="#5384bc"/>
<rect x="1123" y="688" width="21.5" height="18" fill="#606060"/>
<!-- block bracket -->
<path d="M1127.5 719.5 H1124.5 Q1123.5 719.5 1123.5 720.5 V740.5 H1152.5 V720.5 Q1152.5 719.5 1151.5 719.5 H1148.5" fill="none" stroke="#333" stroke-width="1.5"/>
<rect x="1128.5" y="716.5" width="5" height="5" fill="#5384bc"/>
<rect x="1142" y="716.5" width="5" height="5" fill="#5384bc"/>
</svg>
<!-- canvas drawing -->
<svg class="a" style="left:0;top:0" width="1162" height="858" viewBox="0 0 1162 858">
<g stroke="#b389ab" stroke-width="1" fill="none" shape-rendering="crispEdges">
<line x1="311" y1="453.5" x2="854" y2="453.5"/>
<line x1="582.5" y1="213" x2="582.5" y2="695"/>
</g>
<g stroke="#c9a2c6" stroke-width="1" fill="none" shape-rendering="crispEdges">
<line x1="341" y1="576.5" x2="823" y2="330.5"/>
<line x1="340.5" y1="330.5" x2="823" y2="576.5"/>
<line x1="387" y1="312.5" x2="582.5" y2="453.5"/>
</g>
<g stroke="#fff" stroke-width="2" fill="none" shape-rendering="crispEdges">
<path d="M477.94 287.72 A196 196 0 1 1 392.19 406.61 A84.7 84.7 0 1 0 477.94 287.72 Z"/>
<rect x="757" y="364" width="66" height="178"/>
</g>
<g stroke="#ffff00" stroke-width="2" fill="none">
<line x1="757" y1="588" x2="757" y2="610"/>
<line x1="823" y1="588" x2="823" y2="610"/>
<line x1="757" y1="600.5" x2="823" y2="600.5"/>
</g>
<circle cx="764.5" cy="600.5" r="2.2" fill="#ffff00"/>
<circle cx="815.5" cy="600.5" r="2.2" fill="#ffff00"/>
<text x="790" y="618" fill="#f4f400" font-family="Liberation Serif" font-size="18" text-anchor="middle">15</text>
</svg>
<!-- canvas extras -->
<svg class="a" style="left:0;top:0" width="1162" height="858" viewBox="0 0 1162 858">
<g stroke="#fff" stroke-width="1" fill="none">
<rect x="100.5" y="731.5" width="8" height="8"/>
<path d="M104.5 731 V697 M109 735.5 H143"/>
<path d="M104.5 686 L101 697.5 H108 Z M104.5 690 V697"/>
<path d="M154.5 735.5 L143 732 V739 Z M150 735.5 H143"/>
<path d="M100 667 L104.5 671 L109 667 M104.5 671 V677"/>
<path d="M164 731 L173 740 M173 731 L164 740"/>
</g>
<!-- scale bar -->
<rect x="894.5" y="721.5" width="154" height="8" fill="none" stroke="#808080" stroke-width="1"/>
<rect x="894" y="725" width="22" height="5" fill="#808080"/>
<rect x="916" y="721" width="44" height="4.5" fill="#808080"/>
<rect x="960" y="725" width="89" height="5" fill="#808080"/>
<g font-family="Liberation Sans" font-size="11" fill="#808080">
<text x="912" y="718">5</text>
<text x="1042" y="718">35</text>
<text x="890" y="740">0</text>
<text x="954" y="740">15</text>
</g>
<rect x="1066.5" y="747.5" width="11" height="11" fill="none" stroke="#fff" stroke-width="1"/>
<!-- layout tab nav -->
<rect x="80.5" y="760.5" width="31" height="16" fill="#f2f2f2" stroke="#b0b0b0" stroke-width="1"/>
<path d="M96.5 761 V776" stroke="#c8c8c8" stroke-width="1"/>
<path d="M92.5 764.5 L87.5 769 L92.5 773.5 Z" fill="#666"/>
<path d="M101.5 764.5 L106.5 769 L101.5 773.5 Z" fill="#666"/>
<path d="M150 761 L160 776.5 H200 L210 761 Z" fill="#eaf1f8"/>
<path d="M150 761 L160 776.5 H200 L210 761" fill="none" stroke="#222" stroke-width="1"/>
<path d="M199 761 L205.5 776.5 H246 L252.5 761 Z" fill="#f7f7f7"/>
<path d="M199 761 L205.5 776.5 H246 L252.5 761" fill="none" stroke="#222" stroke-width="1"/>
<path d="M113.5 761 L120.5 776.5 H153 L160 761 Z" fill="#fafafa"/>
<path d="M113.5 761 L120.5 776.5 H153 L160 761" fill="none" stroke="#222" stroke-width="1"/>
</svg>
<!-- layout tab text -->
<div class="t" style="left:125px;top:763px;font-size:12px;color:#111">模型</div>
<div class="t" style="left:164px;top:763px;font-size:12px;color:#111">布局1</div>
<div class="t" style="left:210px;top:763px;font-size:12px;color:#111">布局2</div>
<!-- command text -->
<div class="t" style="left:4px;top:784px;font-size:12px;color:#000;letter-spacing:1px">命令:</div>
<div class="t" style="left:11px;top:800px;font-size:12px;color:#000;letter-spacing:1px">指定对角点:</div>
<div class="t" style="left:4px;top:818px;font-size:12px;color:#000;letter-spacing:1px">命令:</div>
<div class="a" style="left:43px;top:819px;width:2px;height:13px;background:#000"></div>
<!-- cmd scrollbars -->
<svg class="a" style="left:0;top:0" width="1162" height="858" viewBox="0 0 1162 858">
<rect x="1141" y="784" width="16" height="32" fill="#f0f0f0"/>
<path d="M1144.5 795 L1148.3 791 L1152 795" fill="none" stroke="#555" stroke-width="2"/>
<path d="M1144.5 806 L1148.3 810 L1152 806" fill="none" stroke="#555" stroke-width="2"/>
<rect x="1071" y="817" width="70" height="19" fill="#f0f0f0"/>
<rect x="1086" y="818" width="16" height="16" fill="#cdcdcd"/>
<path d="M1080.5 823 L1077 826.5 L1080.5 830" fill="none" stroke="#555" stroke-width="2"/>
<path d="M1130 823 L1133.5 826.5 L1130 830" fill="none" stroke="#555" stroke-width="2"/>
<rect x="1141" y="817" width="16" height="19" fill="#f0f0f0"/>
</svg>
<!-- status bar -->
<div class="t" style="left:3px;top:843px;font-size:12.2px;color:#111">498633.991653,&nbsp; 175069.544266,&nbsp; 0.000000</div>
<div class="t" style="left:627px;top:843px;font-size:12.5px;color:#111">栅格</div>
<div class="a" style="left:661px;top:839px;width:34px;height:19px;background:#e1eef9;border:1px solid #4f8fc4"></div>
<div class="t" style="left:664px;top:843px;font-size:12.5px;color:#111">正交</div>
<div class="t" style="left:699px;top:843px;font-size:12.5px;color:#111">极轴</div>
<div class="a" style="left:733px;top:839px;width:58px;height:19px;background:#e1eef9;border:1px solid #4f8fc4"></div>
<div class="t" style="left:736px;top:843px;font-size:12.5px;color:#111">对象捕捉</div>
<div class="a" style="left:793px;top:839px;width:58px;height:19px;background:#e1eef9;border:1px solid #4f8fc4"></div>
<div class="t" style="left:796px;top:843px;font-size:12.5px;color:#111">对象追踪</div>
<div class="a" style="left:854px;top:839px;width:35px;height:19px;background:#e1eef9;border:1px solid #4f8fc4"></div>
<div class="t" style="left:856px;top:844px;font-size:12.5px;color:#111">DYN</div>
<div class="a" style="left:891px;top:839px;width:34px;height:19px;background:#e1eef9;border:1px solid #4f8fc4"></div>
<div class="t" style="left:893px;top:843px;font-size:12.5px;color:#111">线宽</div>
<div class="t" style="left:928px;top:844px;font-size:12px;color:#1c1cc8">提交软件问题或增加新功能</div>
<div class="a" style="left:1089px;top:840px;width:67px;height:18px;background:#fff"></div>
<svg class="a" style="left:0;top:0" width="1162" height="858" viewBox="0 0 1162 858">
<path d="M1089 855.5 L1092 842 H1097.5 L1094.5 855.5 Z M1095 855.5 L1097.5 846 L1100.5 855.5 Z M1098.5 842 H1103.5 L1106 855.5 H1101 Z" fill="#17a08a"/>
<path d="M1089 855 L1105 845.5" stroke="#aef4ee" stroke-width="1"/>
</svg>
<div class="t" style="left:1109px;top:843px;font-size:12.6px;color:#1a2030">MxCAD</div>
</body></html>
